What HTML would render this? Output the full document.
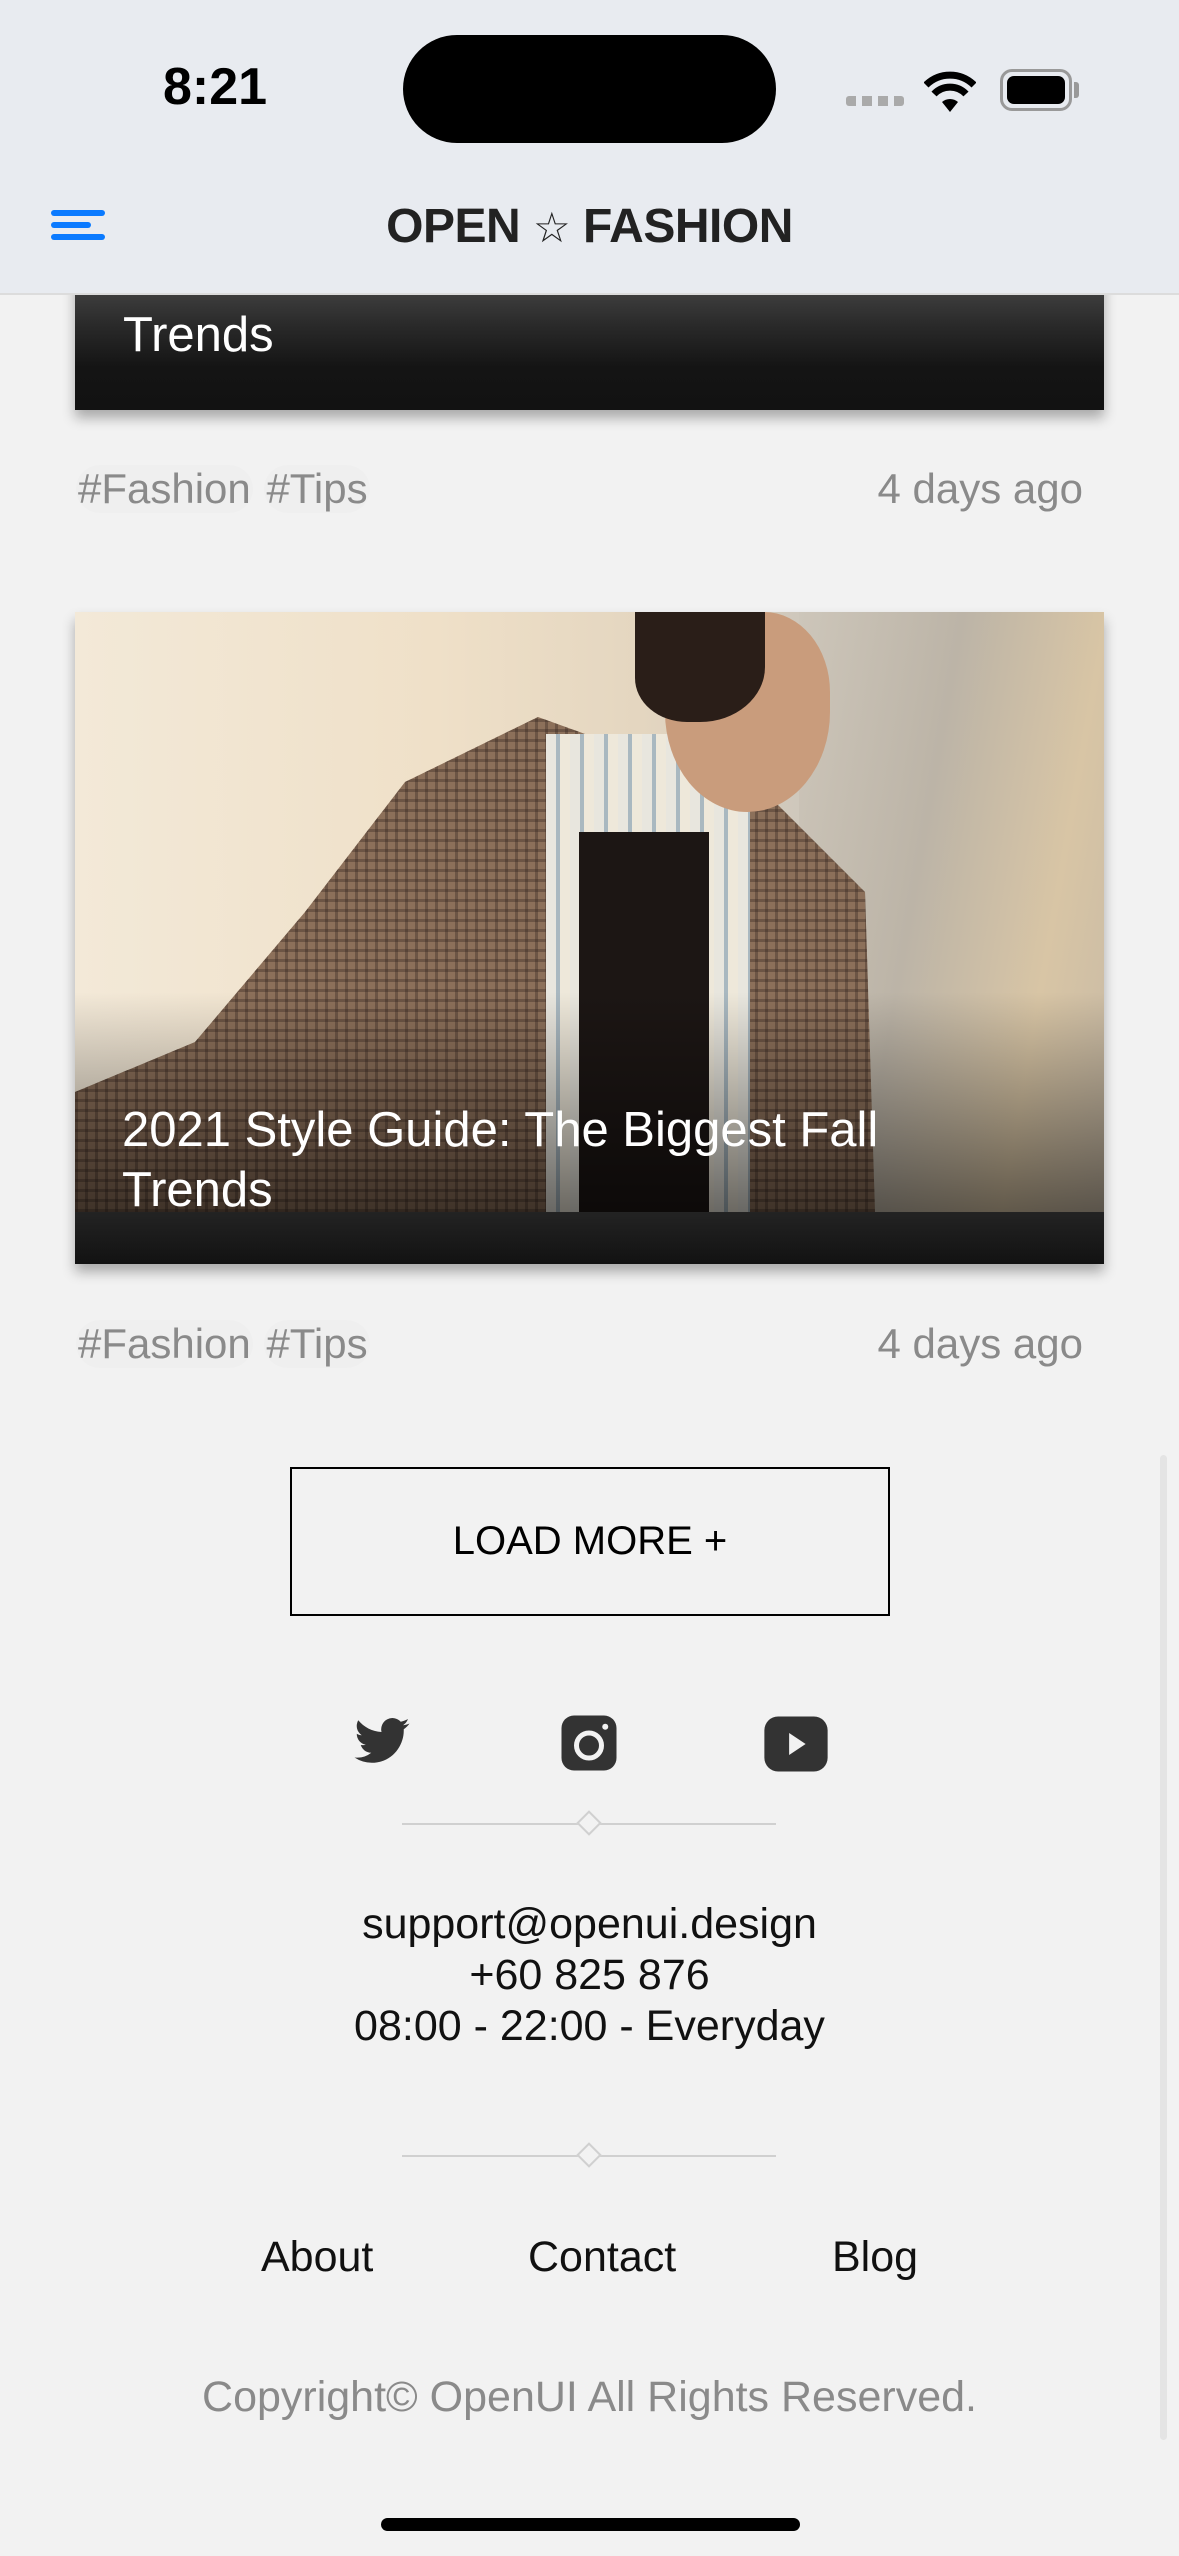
<!DOCTYPE html>
<html><head><meta charset="utf-8">
<style>
*{margin:0;padding:0;box-sizing:border-box}
body{width:1179px;height:2556px;background:#f2f2f2;font-family:"Liberation Sans",sans-serif;position:relative;overflow:hidden}
.abs{position:absolute}
.hdr{left:0;top:0;width:1179px;height:295px;background:#e8ebf0;border-bottom:2px solid #dcdcdc;z-index:5}
.tags{font-size:42px;color:#8a8a8a}
.tag{display:inline-block;border-radius:24px;background:#efefef;padding:0 2px}
.c{text-align:center;width:1179px;left:0}
.check{background-color:#8c705a;background-image:repeating-linear-gradient(0deg,rgba(50,35,30,.35) 0 3px,transparent 3px 10px),repeating-linear-gradient(90deg,rgba(50,35,30,.35) 0 3px,transparent 3px 10px)}
.lk{font-size:43px;color:#111}
</style></head><body>

<!-- card 1 remnant -->
<div class="abs" style="left:75px;top:240px;width:1029px;height:170px;background:linear-gradient(#5e5e5e,#2a2a2a 50%,#141414 75%,#121212);box-shadow:0 8px 12px rgba(0,0,0,.3)">
 <div class="abs" style="left:48px;top:67px;color:#fff;font-size:49px">Trends</div>
</div>
<div class="abs tags" style="left:76px;top:465px"><span class="tag">#Fashion</span> <span class="tag">#Tips</span></div>
<div class="abs tags" style="right:96px;top:465px">4 days ago</div>

<!-- card 2 -->
<div class="abs" style="left:75px;top:612px;width:1029px;height:652px;overflow:hidden;box-shadow:0 8px 12px rgba(0,0,0,.3);background:#121212">
 <div class="abs" style="left:0;top:0;width:1029px;height:600px;background:linear-gradient(90deg,#f3e9d8 0%,#efe0c8 35%,#e4d6c0 55%,#cfc8bc 70%,#c6c0b6 85%,#d2c4ae 100%)"></div>
 <div class="abs" style="left:724px;top:0;width:305px;height:600px;background:linear-gradient(100deg,#cdc6ba,#bcb4a7 40%,#d8c5a5 75%,#c8baa5)"></div>
 <!-- coat left -->
 <div class="abs check" style="left:0;top:0;width:700px;height:600px;clip-path:polygon(463px 105px,560px 140px,600px 600px,0 600px,0 480px,120px 430px,230px 300px,330px 170px)"></div>
 <!-- coat right -->
 <div class="abs check" style="left:630px;top:150px;width:170px;height:450px;clip-path:polygon(0 0,60px 30px,160px 130px,170px 450px,0 450px)"></div>
 <!-- shirt -->
 <div class="abs" style="left:471px;top:122px;width:204px;height:478px;background:repeating-linear-gradient(90deg,#e8e6de 0 10px,#a9b8c0 10px 14px,#eee8da 14px 24px)"></div>
 <div class="abs" style="left:504px;top:220px;width:130px;height:380px;background:#1c1614"></div>
 <!-- head -->
 <div class="abs" style="left:590px;top:0;width:165px;height:200px;background:#c99c7c;border-radius:40% 40% 50% 50%"></div>
 <div class="abs" style="left:560px;top:0;width:130px;height:110px;background:#2a1e18;border-radius:0 0 50% 40%"></div>
 <!-- gradient overlay -->
 <div class="abs" style="left:0;top:380px;width:1029px;height:220px;background:linear-gradient(rgba(0,0,0,0),rgba(0,0,0,.55))"></div>
 <div class="abs" style="left:0;top:600px;width:1029px;height:52px;background:linear-gradient(#232323,#121212)"></div>
 <div class="abs" style="left:47px;top:488px;color:#fff;font-size:49px;line-height:60px;width:980px">2021 Style Guide: The Biggest Fall<br>Trends</div>
</div>
<div class="abs tags" style="left:76px;top:1320px"><span class="tag">#Fashion</span> <span class="tag">#Tips</span></div>
<div class="abs tags" style="right:96px;top:1320px">4 days ago</div>

<!-- load more -->
<div class="abs" style="left:290px;top:1467px;width:600px;height:149px;border:2px solid #000;font-size:40px;text-align:center;line-height:145px;color:#000">LOAD MORE +</div>

<!-- social -->
<svg class="abs" style="left:350px;top:1712px" width="64" height="60" viewBox="0 0 24 24"><path fill="#333" d="M23 4.6c-.8.4-1.7.6-2.6.7.9-.6 1.6-1.4 2-2.5-.9.5-1.9.9-2.9 1.1a4.5 4.5 0 0 0-7.7 4.1C8 7.8 4.7 6 2.5 3.3a4.5 4.5 0 0 0 1.4 6c-.7 0-1.4-.2-2-.6 0 2.2 1.5 4 3.6 4.4-.7.2-1.4.2-2 .1.6 1.8 2.2 3.1 4.2 3.1A9 9 0 0 1 1 18.2 12.8 12.8 0 0 0 7.9 20.3c8.3 0 12.8-6.9 12.8-12.8v-.6c.9-.6 1.7-1.4 2.3-2.3z"/></svg>
<svg class="abs" style="left:559px;top:1712px" width="60" height="62" viewBox="0 0 24 24"><rect x="1" y="1" width="22" height="22" rx="5" fill="#333"/><circle cx="12" cy="13" r="5" fill="none" stroke="#f2f2f2" stroke-width="2"/><circle cx="18.5" cy="5.5" r="1.2" fill="#f2f2f2"/></svg>
<svg class="abs" style="left:763px;top:1715px" width="66" height="58" viewBox="0 0 24 21"><rect x="0.5" y="0.5" width="23" height="20" rx="5" fill="#333"/><path d="M9.5 6.5v8l6-4z" fill="#f2f2f2"/></svg>

<!-- divider 1 -->
<div class="abs" style="left:402px;top:1823px;width:374px;height:2px;background:#d0d0d0"></div>
<div class="abs" style="left:580px;top:1814px;width:18px;height:18px;border:2px solid #d0d0d0;background:#f2f2f2;transform:rotate(45deg)"></div>

<div class="abs c" style="top:1899px;font-size:43px;line-height:51px;color:#111">support@openui.design<br>+60 825 876<br>08:00 - 22:00 - Everyday</div>

<!-- divider 2 -->
<div class="abs" style="left:402px;top:2155px;width:374px;height:2px;background:#d0d0d0"></div>
<div class="abs" style="left:580px;top:2146px;width:18px;height:18px;border:2px solid #d0d0d0;background:#f2f2f2;transform:rotate(45deg)"></div>

<div class="abs lk" style="left:261px;top:2233px">About</div>
<div class="abs lk" style="left:528px;top:2233px">Contact</div>
<div class="abs lk" style="left:832px;top:2233px">Blog</div>

<div class="abs c" style="top:2373px;font-size:43px;color:#8a8a8a">Copyright© OpenUI All Rights Reserved.</div>

<!-- scrollbar -->
<div class="abs" style="left:1160px;top:1455px;width:7px;height:985px;border-radius:4px;background:#e4e4e4"></div>

<!-- home indicator -->
<div class="abs" style="left:381px;top:2518px;width:419px;height:13px;border-radius:7px;background:#000"></div>

<!-- header -->
<div class="abs hdr">
 <div class="abs" style="left:163px;top:57px;font-size:52px;font-weight:bold;color:#000">8:21</div>
 <div class="abs" style="left:403px;top:35px;width:373px;height:108px;border-radius:54px;background:#000"></div>
 <div class="abs" style="left:846px;top:96px;width:58px;height:10px;background:repeating-linear-gradient(90deg,#aaa 0 10px,transparent 10px 16px);border-radius:3px"></div>
 <svg class="abs" style="left:924px;top:70px" width="52" height="42" viewBox="0 0 26 21"><path d="M13 21l-4-5a6 6 0 0 1 8 0z" fill="#000"/><path d="M5 12a11 11 0 0 1 16 0" stroke="#000" stroke-width="3.5" fill="none"/><path d="M1 7.5a17 17 0 0 1 24 0" stroke="#000" stroke-width="3.5" fill="none"/></svg>
 <div class="abs" style="left:1000px;top:69px;width:72px;height:42px;border:3px solid #999;border-radius:12px;padding:4px"><div style="width:100%;height:100%;background:#000;border-radius:7px"></div></div>
 <div class="abs" style="left:1074px;top:82px;width:5px;height:16px;background:#999;border-radius:0 3px 3px 0"></div>
 <div class="abs" style="left:51px;top:210px;width:54px;height:6px;background:#0a7aff;border-radius:3px"></div>
 <div class="abs" style="left:51px;top:222px;width:40px;height:6px;background:#0a7aff;border-radius:3px"></div>
 <div class="abs" style="left:51px;top:234px;width:54px;height:6px;background:#0a7aff;border-radius:3px"></div>
 <div class="abs c" style="top:199px;font-size:48px;color:#222;font-weight:bold;letter-spacing:-0.5px">OPEN <span style="font-family:'DejaVu Sans',sans-serif;font-size:42px;font-weight:normal">☆</span> FASHION</div>
</div>
</body></html>
